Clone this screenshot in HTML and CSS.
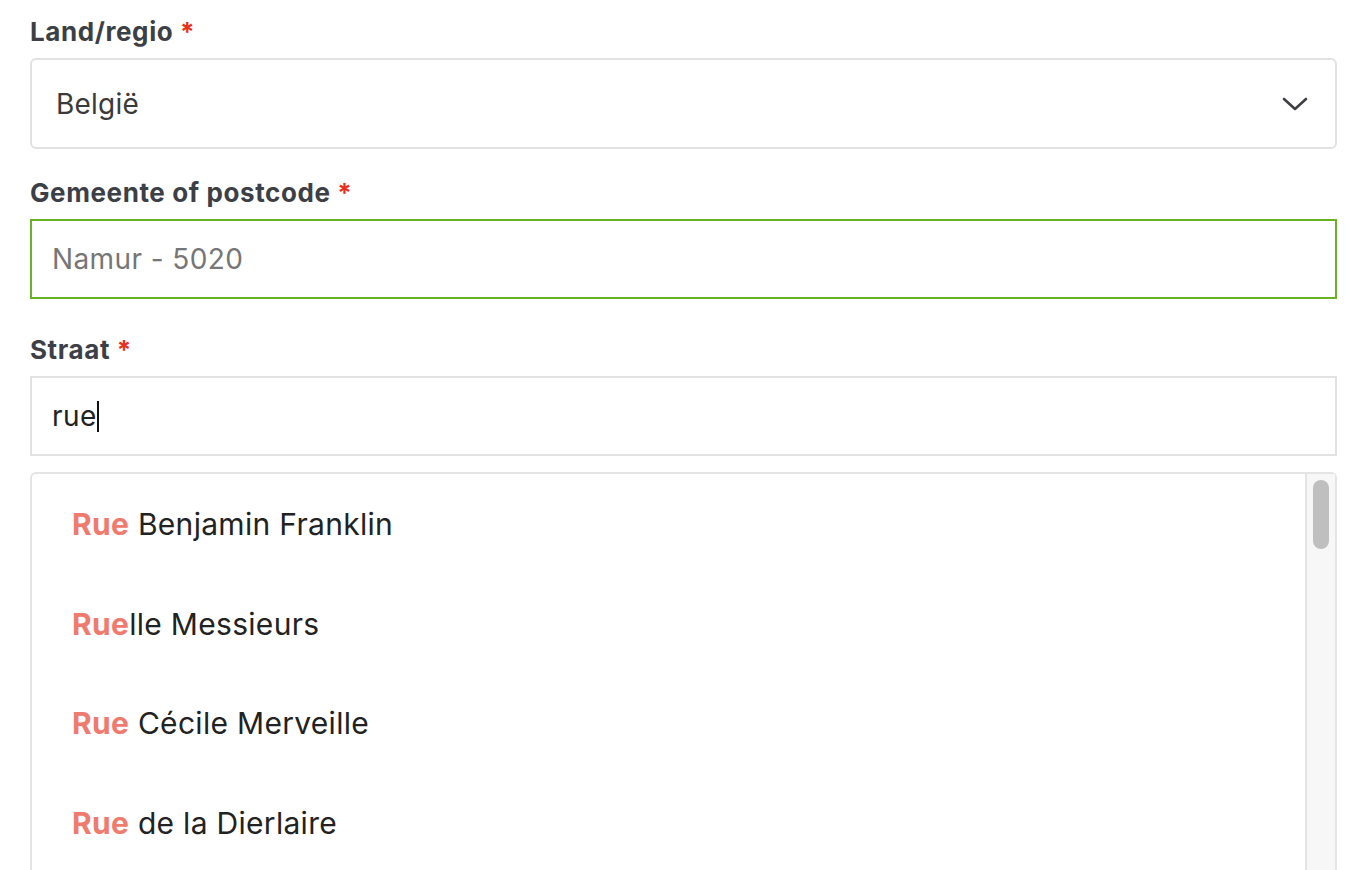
FILE: index.html
```html
<!DOCTYPE html>
<html lang="nl">
<head>
<meta charset="utf-8">
<link rel="stylesheet" href="styles.css">
</head>
<body>
<form class="form">
  <div class="field">
    <label class="label">Land/regio <span class="req">*</span></label>
    <div class="select">
      <span class="select-value">België</span>
      <svg class="chevron" width="26" height="16" viewBox="0 0 26 16"><path d="M2 3 L13 13 L24 3" fill="none" stroke="#3d3f45" stroke-width="2.6" stroke-linecap="round" stroke-linejoin="round"/></svg>
    </div>
  </div>
  <div class="field">
    <label class="label">Gemeente of postcode <span class="req">*</span></label>
    <div class="input input-valid"><span class="placeholder">Namur - 5020</span></div>
  </div>
  <div class="field">
    <label class="label">Straat <span class="req">*</span></label>
    <div class="input"><span class="typed">rue</span><span class="caret"></span></div>
  </div>
  <div class="dropdown">
    <ul class="options">
      <li class="option"><b class="hl">Rue</b> Benjamin Franklin</li>
      <li class="option"><b class="hl">Rue</b>lle Messieurs</li>
      <li class="option"><b class="hl">Rue</b> Cécile Merveille</li>
      <li class="option"><b class="hl">Rue</b> de la Dierlaire</li>
    </ul>
    <div class="scrollbar"><div class="thumb"></div></div>
  </div>
</form>
</body>
</html>
```
FILE: styles.css
```css
* { box-sizing: border-box; }
html, body { margin: 0; padding: 0; background: #fff; }
body {
  font-family: Inter, "Noto Sans", "Liberation Sans", sans-serif;
  height: 870px;
  overflow: hidden;
}
.form {
  padding: 14px 33px 0 30px;
  display: flex;
  flex-direction: column;
}
.field { display: flex; flex-direction: column; }
.label {
  font-size: 26px;
  font-weight: 700;
  letter-spacing: 0.6px;
  color: #3d3f47;
  height: 36px;
  line-height: 36px;
  margin-bottom: 8px;
}
.req { color: #e8301c; }
.select {
  height: 91px;
  border: 2px solid #e2e2e2;
  border-radius: 6px;
  display: flex;
  align-items: center;
  justify-content: space-between;
  padding: 0 27px 0 24px;
  margin-bottom: 26px;
}
.select-value { font-size: 28px; color: #3a3a3a; letter-spacing: 0.2px; }
.chevron { display: block; }
.input {
  height: 80px;
  border: 2px solid #e2e2e2;
  display: flex;
  align-items: center;
  padding: 0 20px;
  font-size: 28px;
  letter-spacing: 0.4px;
  margin-bottom: 16px;
}
.input-valid { border-color: #6bb128; margin-bottom: 33px; }
.placeholder { color: #767676; }
.typed { color: #222; }
.caret {
  display: inline-block;
  width: 2px;
  height: 31px;
  background: #111;
}
.dropdown {
  height: 420px;
  border: 2px solid #e4e4e4;
  border-bottom: none;
  border-radius: 6px 6px 0 0;
  display: flex;
}
.options {
  list-style: none;
  margin: 0;
  padding: 0;
  flex: 1;
}
.option {
  height: 99.7px;
  display: flex;
  align-items: center;
  padding-left: 40px;
  font-size: 30px;
  letter-spacing: 0.3px;
  color: #222;
  white-space: pre;
}
.hl { color: #ef7a6e; font-weight: 700; }
.scrollbar {
  width: 30px;
  background: #f7f7f7;
  border-left: 2px solid #e4e4e4;
  padding: 6px 6px 0 6px;
}
.thumb {
  width: 16px;
  height: 69px;
  border-radius: 8px;
  background: #bfbfbf;
}
```
